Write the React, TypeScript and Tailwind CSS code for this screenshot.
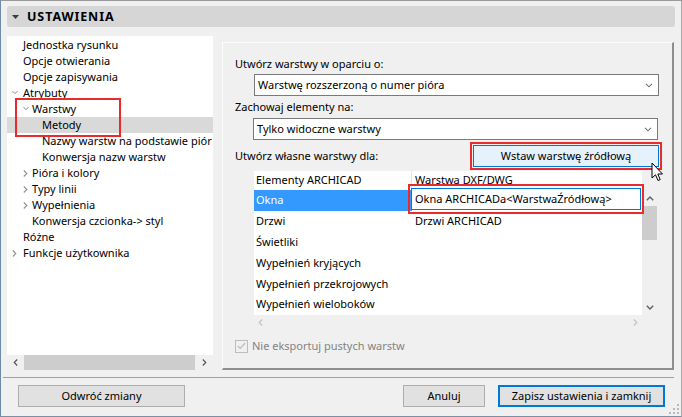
import React from "react";

const ChevDown = ({ c = "#707070", w = 7 }: { c?: string; w?: number }) => (
  <svg width={w} height={5} viewBox="0 0 7 5" className="shrink-0">
    <path d="M0.5 0.8 L3.5 3.8 L6.5 0.8" fill="none" stroke={c} strokeWidth="1.1" />
  </svg>
);
const ChevRight = ({ c = "#808080" }: { c?: string }) => (
  <svg width={5} height={7} viewBox="0 0 5 7" className="shrink-0">
    <path d="M0.8 0.5 L3.8 3.5 L0.8 6.5" fill="none" stroke={c} strokeWidth="1.1" />
  </svg>
);
const ChevLeft = ({ c = "#808080" }: { c?: string }) => (
  <svg width={5} height={7} viewBox="0 0 5 7" className="shrink-0">
    <path d="M4.2 0.5 L1.2 3.5 L4.2 6.5" fill="none" stroke={c} strokeWidth="1.1" />
  </svg>
);
const ChevUp = ({ c = "#606060" }: { c?: string }) => (
  <svg width={8} height={5} viewBox="0 0 8 5" className="shrink-0">
    <path d="M0.8 4.2 L4 1 L7.2 4.2" fill="none" stroke={c} strokeWidth="1.4" />
  </svg>
);
const ChevDownBold = ({ c = "#606060" }: { c?: string }) => (
  <svg width={8} height={5} viewBox="0 0 8 5" className="shrink-0">
    <path d="M0.8 0.8 L4 4 L7.2 0.8" fill="none" stroke={c} strokeWidth="1.4" />
  </svg>
);

type Item = { t: string; lvl: number; ch?: "d" | "r"; sel?: boolean };
const tree: Item[] = [
  { t: "Jednostka rysunku", lvl: 0 },
  { t: "Opcje otwierania", lvl: 0 },
  { t: "Opcje zapisywania", lvl: 0 },
  { t: "Atrybuty", lvl: 0, ch: "d" },
  { t: "Warstwy", lvl: 1, ch: "d" },
  { t: "Metody", lvl: 2, sel: true },
  { t: "Nazwy warstw na podstawie piór", lvl: 2 },
  { t: "Konwersja nazw warstw", lvl: 2 },
  { t: "Pióra i kolory", lvl: 1, ch: "r" },
  { t: "Typy linii", lvl: 1, ch: "r" },
  { t: "Wypełnienia", lvl: 1, ch: "r" },
  { t: "Konwersja czcionka-> styl", lvl: 1 },
  { t: "Różne", lvl: 0 },
  { t: "Funkcje użytkownika", lvl: 0, ch: "r" },
];

const indent = ["pl-[16px]", "pl-[25px]", "pl-[35px]"];
const chevPos = ["left-[5px]", "left-[16px]", "left-[26px]"];

const rows = [
  "Okna",
  "Drzwi",
  "Świetliki",
  "Wypełnień kryjących",
  "Wypełnień przekrojowych",
  "Wypełnień wieloboków",
];
const col2: Record<string, string> = { Drzwi: "Drzwi ARCHICAD" };

export default function App() {
  return (
    <div className="relative w-[682px] h-[417px] overflow-hidden bg-[#f0f0f0] border-l border-l-[#6d8bac] border-t border-t-[#9a9a9a] border-r border-r-[#a9a9a9] border-b border-b-[#7d8fa3] flex flex-col font-['Noto_Sans',sans-serif] text-[11px] text-black leading-[16px]">
      {/* header */}
      <div className="mx-[6px] mt-[5px] h-[21px] rounded-[3px] bg-[#d6d6d6] flex items-center pl-[5px]">
        <svg width={7} height={4} viewBox="0 0 7 4">
          <path d="M0 0 H7 L3.5 4 Z" fill="#3c3c3c" />
        </svg>
        <span className="ml-[8px] font-bold text-[12.5px] tracking-[0.9px]">USTAWIENIA</span>
      </div>

      {/* main */}
      <div className="mt-[9px] h-[334px] flex">
        {/* left tree */}
        <div className="ml-[6px] w-[206px] flex flex-col">
          <div className="relative flex-1 bg-white overflow-hidden pt-[1px]">
            {tree.map((it, i) => (
              <div
                key={i}
                className={`relative h-[16px] flex items-center whitespace-nowrap ${indent[it.lvl]} ${
                  it.sel ? "bg-[#d9d9d9]" : ""
                }`}
              >
                {it.ch && (
                  <span className={`absolute ${chevPos[it.lvl]} top-[5px] flex`}>
                    {it.ch === "d" ? <ChevDown c="#808080" w={6} /> : <ChevRight c="#909090" />}
                  </span>
                )}
                {it.t}
              </div>
            ))}
            <div className="absolute left-[8px] top-[62px] w-[106px] h-[39px] border-2 border-[#ea2b2b]" />
          </div>
          <div className="h-[15px] flex items-center">
            <div className="w-[17px] flex justify-center">
              <ChevLeft c="#505050" />
            </div>
            <div className="w-[171px] h-full bg-[#cdcdcd]" />
            <div className="flex-1 flex justify-center">
              <ChevRight c="#505050" />
            </div>
          </div>
        </div>

        {/* right panel */}
        <div className="ml-[9px] mt-[6px] w-[452px] h-[328px] border-t border-l border-t-[#fbfbfb] border-l-[#fbfbfb] border-r-2 border-b-2 border-r-[#8e8e8e] border-b-[#8e8e8e] pl-[12px] pr-[10px] flex flex-col">
          <div className="mt-[13px]">Utwórz warstwy w oparciu o:</div>
          <div className="mt-[2px] ml-[19px] w-[405px] h-[22px] border border-[#7a7a7a] bg-white flex items-center pl-[3px] pr-[5px]">
            <span className="flex-1">Warstwę rozszerzoną o numer pióra</span>
            <ChevDown c="#707070" w={8} />
          </div>
          <div className="mt-[3px]">Zachowaj elementy na:</div>
          <div className="mt-[3px] ml-[18px] w-[405px] h-[22px] border border-[#7a7a7a] bg-white flex items-center pl-[3px] pr-[5px]">
            <span className="flex-1">Tylko widoczne warstwy</span>
            <ChevDown c="#707070" w={8} />
          </div>
          <div className="mt-[1px] h-[29px] flex items-center">
            <span className="mt-[1px]">Utwórz własne warstwy dla:</span>
            <div className="ml-auto w-[192px] h-[28px] border-2 border-[#ea2b2b] p-[1px]">
              <div className="w-full h-full border border-[#0078d7] bg-[#e5f1fb] flex items-center justify-center">
                Wstaw warstwę źródłową
              </div>
            </div>
          </div>

          {/* table */}
          <div className="mt-[1px] ml-[19px] flex">
            <div className="w-[388px] flex flex-col">
              <div className="relative h-[144px] bg-white">
                <div className="h-[19px] flex items-start">
                  <div className="w-[158px] pl-[2px] h-full pt-[1px] border-r border-[#e5e5e5]">
                    Elementy ARCHICAD
                  </div>
                  <div className="pl-[3px] pt-[1px]">Warstwa DXF/DWG</div>
                </div>
                {rows.map((r, i) => (
                  <div key={r} className="h-[20.8px] flex items-center">
                    <div
                      className={`w-[158px] pl-[2px] h-full flex items-center ${
                        i === 0 ? "bg-[#3399ff] text-white" : ""
                      }`}
                    >
                      {r}
                    </div>
                    <div className="pl-[3px]">{col2[r] || ""}</div>
                  </div>
                ))}
                <div className="absolute left-[154px] top-[13px] w-[236px] h-[30px] border-2 border-[#ea2b2b] pt-[2px] pl-[1px]">
                  <div className="w-[230px] h-[22px] border border-[#0078d7] bg-white flex items-center pl-[3px]">
                    Okna ARCHICADa&lt;WarstwaŹródłową&gt;
                  </div>
                </div>
              </div>
              <div className="h-[15px] flex items-center justify-between px-[4px]">
                <ChevLeft c="#c0c0c0" />
                <ChevRight c="#c0c0c0" />
              </div>
            </div>
            <div className="w-[15px] flex flex-col">
              <div className="h-[19px]" />
              <div className="h-[16px] flex items-center justify-center">
                <ChevUp />
              </div>
              <div className="h-[34px] bg-[#cdcdcd]" />
              <div className="h-[60px]" />
              <div className="h-[15px] flex items-center justify-center">
                <ChevDownBold />
              </div>
            </div>
          </div>

          {/* checkbox */}
          <div className="mt-[8px] flex items-center">
            <div className="w-[13px] h-[13px] border border-[#bcbcbc] bg-[#f0f0f0] flex items-center justify-center">
              <svg width={9} height={8} viewBox="0 0 9 8">
                <path d="M0.8 4 L3.3 6.5 L8.2 1" fill="none" stroke="#bdbdbd" strokeWidth="1.2" />
              </svg>
            </div>
            <span className="ml-[4px] text-[#838383]">Nie eksportuj pustych warstw</span>
          </div>
        </div>
      </div>

      {/* separator */}
      <div className="mt-[7px] ml-[2px] mr-[7px] h-px bg-[#a0a0a0]" />

      {/* buttons */}
      <div className="mt-[7px] flex pl-[17px] pr-[16px]">
        <div className="w-[167px] h-[22px] border border-[#adadad] bg-[#e1e1e1] flex items-center justify-center">
          Odwróć zmiany
        </div>
        <div className="ml-auto w-[82px] h-[22px] border border-[#adadad] bg-[#e1e1e1] flex items-center justify-center">
          Anuluj
        </div>
        <div className="ml-[13px] w-[167px] h-[22px] border-2 border-[#0078d7] bg-[#e1e1e1] flex items-center justify-center">
          Zapisz ustawienia i zamknij
        </div>
      </div>

      {/* size grip */}
      <svg className="absolute right-[1px] bottom-[1px]" width={11} height={11} viewBox="0 0 11 11">
        {[
          [8, 0],
          [8, 4],
          [4, 4],
          [8, 8],
          [4, 8],
          [0, 8],
        ].map(([x, y], i) => (
          <rect key={i} x={x} y={y} width={2} height={2} fill="#b8b8b8" />
        ))}
      </svg>

      {/* mouse cursor */}
      <svg className="absolute left-[650px] top-[161px]" width={13} height={21} viewBox="0 0 13 21">
        <path
          d="M1 1 L1 16 L4.5 12.8 L7 18.5 L9.2 17.6 L6.8 12 L11.5 12 Z"
          fill="white"
          stroke="black"
          strokeWidth="1"
          strokeLinejoin="round"
        />
      </svg>
    </div>
  );
}
